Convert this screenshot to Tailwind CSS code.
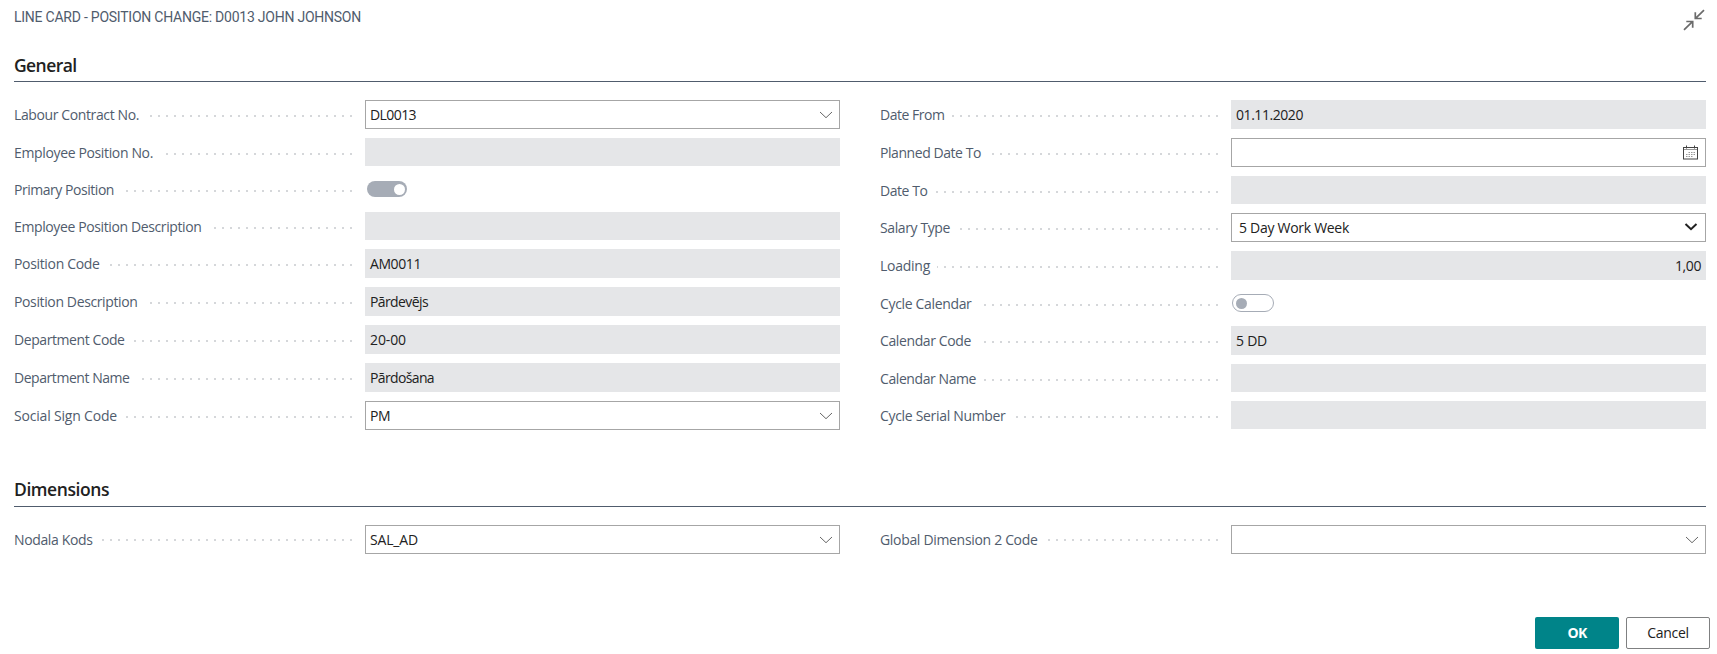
<!DOCTYPE html>
<html lang="en">
<head>
<meta charset="utf-8">
<title>Line Card - Position Change</title>
<script src="https://cdn.jsdelivr.net/npm/@tailwindcss/browser@4"></script>
</head>
<body class="w-[1717px] h-[654px] overflow-hidden bg-white font-['Open_Sans','Noto_Sans',sans-serif] text-[14px] text-[#212121]">
<div class="flex flex-col h-full pl-[14px] pr-[11px]">
  <header class="flex justify-between h-[50px]">
    <h1 class="pt-[7px] text-[14px] leading-[20px] font-normal font-[Roboto,sans-serif] text-[#505c6d] whitespace-nowrap"><span data-w="347" data-f="400 14px Roboto">LINE CARD - POSITION CHANGE: D0013 JOHN JOHNSON</span></h1>
    <svg class="mt-[9px] w-[23px] h-[23px]" viewBox="0 0 23 23" fill="none" stroke="#6b6b6b" stroke-width="1.7"><path d="M21 1.200L12.800 9.200M12.300 3.300V9.500H18.700M1 20.800L9.200 12.800M3.300 12.500H9.700V18.700"/></svg>
  </header>
  <section>
    <h2 class="h-[32px] border-b border-[#505c6d] pt-[3px] text-[17.5px] leading-[24px] font-semibold"><span data-w="62.500" data-f="600 17.5px Open Sans">General</span></h2>
    <div class="grid grid-cols-[826px_826px] gap-x-[40px] pt-[18px]">
      <div class="flex flex-col gap-[9px]" id="general-left"></div>
      <div class="flex flex-col gap-[9px]" id="general-right"></div>
    </div>
  </section>
  <section class="mt-[44px]">
    <h2 class="h-[33px] border-b border-[#505c6d] pt-[3px] text-[17.5px] leading-[24px] font-semibold"><span data-w="95" data-f="600 17.5px Open Sans">Dimensions</span></h2>
    <div class="grid grid-cols-[826px_826px] gap-x-[40px] pt-[18px]">
      <div class="flex flex-col" id="dim-left"></div>
      <div class="flex flex-col" id="dim-right"></div>
    </div>
  </section>
  <footer class="flex justify-end gap-[7px] mt-[63px] -mr-[4px]">
    <button class="w-[84px] h-[32px] rounded-[2px] bg-[#008489] text-white font-bold leading-[30px]"><span data-w="19" data-f="700 14px Open Sans">OK</span></button>
    <button class="w-[84px] h-[32px] rounded-[2px] border border-[#7f8081] bg-white font-medium leading-[30px]"><span data-w="41.500" data-f="500 14px Open Sans">Cancel</span></button>
  </footer>
</div>
<script>
const chevron = '<svg class="w-[14px] h-[8px] mr-[6px]" viewBox="0 0 14 8" fill="none" stroke="#666" stroke-width="1"><path d="M1 1l6 5.700l6-5.700"/></svg>';
const bold = '<svg class="w-[14px] h-[8px] mr-[7px] -mt-[1px]" viewBox="0 0 14 8" fill="none" stroke="#212121" stroke-width="2"><path d="M1.500 1l5.500 5.200l5.500-5.200"/></svg>';
const calendar = '<svg class="w-[16px] h-[15px] mr-[6px]" viewBox="0 0 16 15" fill="none" stroke="#444" stroke-width="1"><path d="M.5 2v12M14.500 2v12M0 14h15M0 2.500h15M3.500 0.500v3M11.500 0.500v3"/><path stroke="#999" d="M1 4.500h13"/><path stroke="#999" stroke-dasharray="1.500 1" d="M5.500 7.500h7M3 9.500h9.500M3 11.500h7.500"/></svg>';
// label, label width, leader width, kind, height, value, value width
const left = [
  ['Labour Contract No.',125,202,'lookup',29,'DL0013',46],
  ['Employee Position No.',139,186,'read',28],
  ['Primary Position',100,226,'on',28],
  ['Employee Position Description',187.5,138,'read',28],
  ['Position Code',85.5,242,'read',29,'AM0011',51],
  ['Position Description',123.5,202,'read',29,'Pārdevējs',58],
  ['Department Code',110.5,218,'read',29,'20-00',36],
  ['Department Name',115.5,210,'read',29,'Pārdošana',64],
  ['Social Sign Code',103,226,'lookup',29,'PM',20]];
const right = [
  ['Date From',64.5,266,'read',29,'01.11.2020',67],
  ['Planned Date To',101,226,'date',29],
  ['Date To',47.5,282,'read',28],
  ['Salary Type',70,258,'select',29,'5 Day Work Week',110],
  ['Loading',50,281,'number',29,'1,00',26],
  ['Cycle Calendar',91.5,234,'off',28],
  ['Calendar Code',91,234,'read',29,'5 DD',31],
  ['Calendar Name',96,234,'read',28],
  ['Cycle Serial Number',125.5,202,'read',28]];
const box = {
  read: 'flex items-center w-[475px] h-full bg-[#e5e6e8] px-[5px]',
  number: 'flex items-center justify-end w-[475px] h-full bg-[#e5e6e8] px-[5px]',
  lookup: 'flex items-center justify-between w-[475px] h-full border border-[#a6a6a6] bg-white pl-[4px]',
  date: 'flex items-center justify-end w-[475px] h-full border border-[#a6a6a6] bg-white',
  select: 'flex items-center justify-between w-[475px] h-full border border-[#a6a6a6] bg-white pl-[7px]'
};
const icons = {lookup: chevron, date: calendar, select: bold};
function field(kind, value, w) {
  if (kind === 'on') return '<div class="w-[475px] pl-[2px] pt-[6px]"><div class="flex items-center justify-end w-[40px] h-[16px] rounded-full bg-[#a6acb6] pr-[2px]"><i class="block size-[11px] rounded-full bg-white"></i></div></div>';
  if (kind === 'off') return '<div class="w-[475px] pl-[1px] pt-[5px]"><div class="flex items-center w-[42px] h-[18px] rounded-full border border-[#a6acb6] pl-[3px]"><i class="block size-[11px] rounded-full bg-[#a6acb6]"></i></div></div>';
  const text = value ? `<span class="whitespace-pre leading-[20px]" data-w="${w}">${value}</span>` : '<span></span>';
  return `<div class="${box[kind]}">${text}${icons[kind] || ''}</div>`;
}
function fill(id, rows, dotY) {
  document.getElementById(id).innerHTML = rows.map(([label, lw, dots, kind, h, value, vw]) =>
    `<div class="flex" style="height:${h}px"><div class="flex justify-between w-[338px] mr-[13px]"><span class="pt-[5px] leading-[20px] text-[#505c6d] whitespace-nowrap" data-w="${lw}">${label}</span><i class="${dotY} h-[2px] bg-[repeating-linear-gradient(to_left,#d5d7da_0px_2px,transparent_2px_8px)] shrink-0" style="width:${dots}px"></i></div>${field(kind, value, vw)}</div>`).join('');
}
fill('general-left', left, 'mt-[15px]');
fill('general-right', right, 'mt-[15px]');
fill('dim-left', [['Nodala Kods',78.5,250,'lookup',29,'SAL_AD',48]], 'mt-[14px]');
fill('dim-right', [['Global Dimension 2 Code',157.5,170,'lookup',29,'',0]], 'mt-[14px]');
// Track each text run to its specified width
const ctx = document.createElement('canvas').getContext('2d');
document.querySelectorAll('[data-w]').forEach(e => {
  ctx.font = (e.dataset.f || '400 14px Open Sans').replace(/px (.*)$/, 'px "$1"');
  e.style.letterSpacing = ((+e.dataset.w - ctx.measureText(e.textContent).width) / e.textContent.length).toFixed(3) + 'px';
});
</script>
</body>
</html>
